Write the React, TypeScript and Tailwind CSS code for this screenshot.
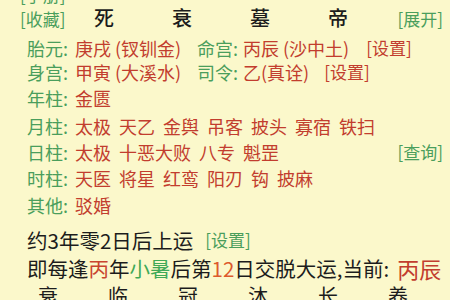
import React from 'react';

const green = 'text-[#4a9e5c]';
const red = 'text-[#c23d2e]';

const Label = ({ text, w = 'w-[48px]' }: { text: string; w?: string }) => (
  <span className={`${green} ${w} shrink-0 whitespace-nowrap text-[18px]`}>{text}</span>
);

const Words = ({ words }: { words: string[] }) => (
  <div className={`flex gap-[8px] ${red} text-[18px]`}>
    {words.map((w, i) => (
      <span key={i}>{w}</span>
    ))}
  </div>
);

const pillars = [
  { label: '年柱:', words: ['金匮'], mt: 'mt-[6px]' },
  { label: '月柱:', words: ['太极', '天乙', '金舆', '吊客', '披头', '寡宿', '铁扫'], mt: 'mt-[8px]' },
];

export default function App() {
  return (
    <div
      className="w-[450px] h-[300px] overflow-hidden whitespace-nowrap bg-[#fbf8cb] text-[#1c1c1c]"
      style={{ fontFamily: '"Noto Sans CJK SC", "Noto Sans", sans-serif' }}
    >
      {/* cut-off top row */}
      <div className="-mt-[15px] flex h-[20px] items-center pl-[20px]">
        <span className={`${green} text-[17px]`}>[手册]</span>
      </div>

      {/* 十二长生 row */}
      <div className="mt-[3px] flex h-[20px] items-center pr-[7px] leading-none">
        <span className={`${green} ml-[20px] w-[45px] shrink-0 text-[17px]`}>[收藏]</span>
        {['死', '衰', '墓', '帝'].map((c) => (
          <span key={c} className="w-[78px] shrink-0 text-center text-[20px] font-medium">
            {c}
          </span>
        ))}
        <span className={`${green} ml-auto text-[17px]`}>[展开]</span>
      </div>

      <div className="mt-[10px] flex h-[20px] items-center pl-[27px]">
        <Label text="胎元:" />
        <span className={`${red} w-[122px] shrink-0 text-[18px]`}>庚戌 (钗钏金)</span>
        <Label text="命宫:" w="w-[46px]" />
        <span className={`${red} text-[18px]`}>丙辰 (沙中土)</span>
        <span className={`${red} ml-[17px] text-[17px]`}>[设置]</span>
      </div>

      <div className="mt-[4px] flex h-[20px] items-center pl-[27px]">
        <Label text="身宫:" />
        <span className={`${red} w-[122px] shrink-0 text-[18px]`}>甲寅 (大溪水)</span>
        <Label text="司令:" w="w-[46px]" />
        <span className={`${red} text-[18px]`}>乙(真诠)</span>
        <span className={`${red} ml-[15px] text-[17px]`}>[设置]</span>
      </div>

      {pillars.map((p) => (
        <div key={p.label} className={`${p.mt} flex h-[20px] items-center pl-[27px]`}>
          <Label text={p.label} />
          <Words words={p.words} />
        </div>
      ))}

      <div className="mt-[6px] flex h-[20px] items-center pl-[27px] pr-[7px]">
        <Label text="日柱:" />
        <Words words={['太极', '十恶大败', '八专', '魁罡']} />
        <span className={`${green} ml-auto text-[17px]`}>[查询]</span>
      </div>

      <div className="mt-[6px] flex h-[20px] items-center pl-[27px]">
        <Label text="时柱:" />
        <Words words={['天医', '将星', '红鸾', '阳刃', '钩', '披麻']} />
      </div>

      <div className="mt-[7px] flex h-[20px] items-center pl-[27px]">
        <Label text="其他:" />
        <Words words={['驳婚']} />
      </div>

      <div className="mt-[15px] flex h-[20px] items-center pl-[27px]">
        <span className="text-[20.5px]">约3年零2日后上运</span>
        <span className={`${green} ml-[12px] text-[17px]`}>[设置]</span>
      </div>

      <div className="mt-[8px] flex h-[20px] items-center pl-[27px] text-[20.5px]">
        <span>
          即每逢<span className="text-[#c9452f]">丙</span>年<span className="text-[#3fa957]">小暑</span>后第
          <span className="text-[#dd5a2c]">12</span>日交脱大运,当前:
        </span>
        <span className={`${red} ml-[8px] text-[22px]`}>丙辰</span>
      </div>

      <div className="mt-[8px] flex h-[20px] items-center pl-[13px] leading-none">
        {['衰', '临', '冠', '沐', '长', '养'].map((c) => (
          <span key={c} className="w-[70px] shrink-0 text-center text-[20px]">
            {c}
          </span>
        ))}
      </div>
    </div>
  );
}
